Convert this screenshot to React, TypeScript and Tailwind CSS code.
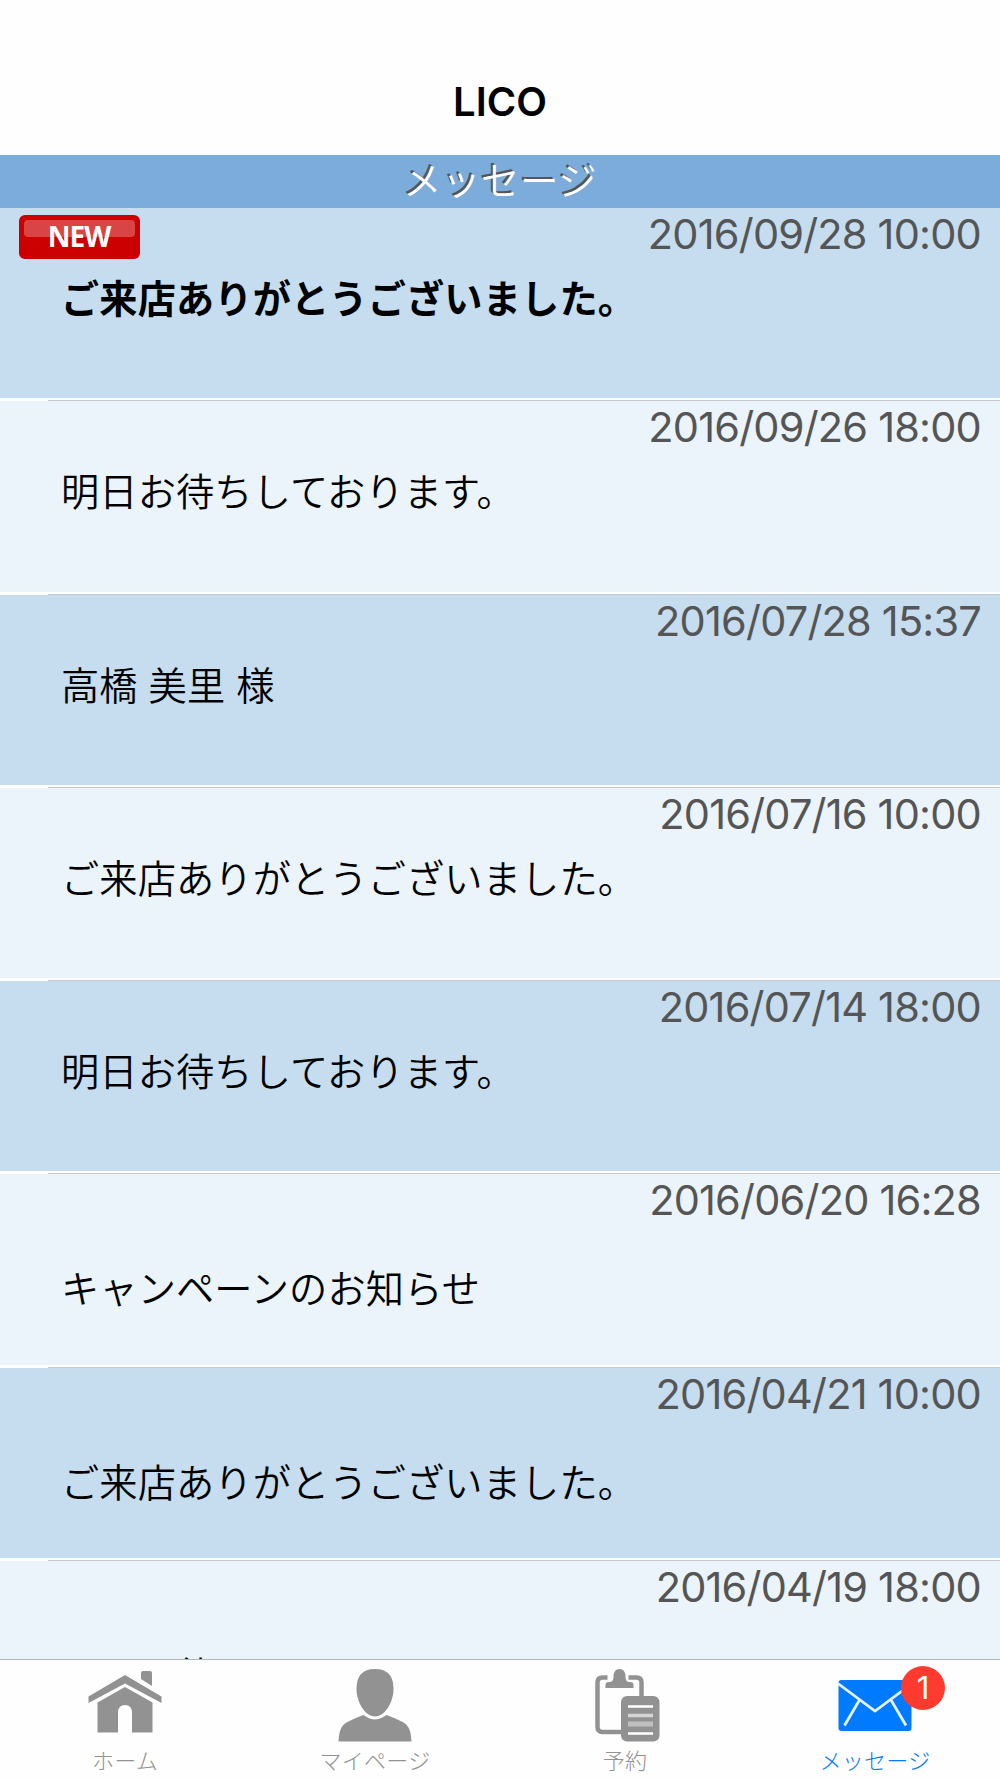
import React from 'react';

interface Message {
  date: string;
  title: string;
  isNew?: boolean;
  low?: boolean;
}

const messages: Message[] = [
  { date: '2016/09/28 10:00', title: 'ご来店ありがとうございました。', isNew: true },
  { date: '2016/09/26 18:00', title: '明日お待ちしております。' },
  { date: '2016/07/28 15:37', title: '高橋 美里 様' },
  { date: '2016/07/16 10:00', title: 'ご来店ありがとうございました。' },
  { date: '2016/07/14 18:00', title: '明日お待ちしております。' },
  { date: '2016/06/20 16:28', title: 'キャンペーンのお知らせ', low: true },
  { date: '2016/04/21 10:00', title: 'ご来店ありがとうございました。', low: true },
  { date: '2016/04/19 18:00', title: '明日お待ちしております。', low: true },
];

function HomeIcon() {
  return (
    <svg width="74" height="74" viewBox="0 0 74 74" fill="currentColor">
      <path d="M0.500 28.5 37 7l36.500 21.5V35L37 15.5.5 35z" />
      <path d="M53 5q0-2 2-2h7q2 0 2 2v13l-11-7z" />
      <path d="M9.5 34.500 37 19l27.500 15.500V64.500H44V45q0-8-7-8t-7 8v19.500H9.500z" />
    </svg>
  );
}

function PersonIcon() {
  return (
    <svg width="74" height="74" viewBox="0 0 74 74" fill="currentColor">
      <path d="M37 1c13 0 18.500 7 18.500 20C55.500 34 47 48.500 37 48.500S18.500 34 18.500 21C18.500 8 24 1 37 1z" />
      <path d="M25.500 47c2 1 6 4.500 11.500 4.500S46.500 48 48.500 47c5 2 11 4 17 7.500C72 58 73 66 73.500 73.500H.5C1 66 2 58 8.500 54.500c6-3.500 12-5.500 17-7.500z" />
    </svg>
  );
}

function ReserveIcon() {
  return (
    <svg width="74" height="74" viewBox="2.500 0 74 74" fill="currentColor">
      <path d="M22 9.500h-5q-5 0-5 5V59q0 5 5 5h21M43 9.500h8q5 0 5 5V30" fill="none" stroke="currentColor" strokeWidth="4.500" />
      <path d="M28 9q0-8 6-8t6 8q0 5 4 5h1q3 0 3 3v3H20v-3q0-3 3-3h1q4 0 4-5z" />
      <rect x="35.500" y="28" width="38.500" height="45.500" rx="6" />
      <path d="M42.500 38.500h25M42.500 65.500h25" stroke="white" strokeWidth="2.500" />
      <path d="M42.500 47.500h25" stroke="#d5d5d5" strokeWidth="3.500" />
      <path d="M42.500 56h25" stroke="#c0c0c0" strokeWidth="5" />
    </svg>
  );
}

function MailIcon() {
  return (
    <svg width="74" height="74" viewBox="0 0 74 74">
      <rect x="0.500" y="12" width="73" height="51" rx="3" fill="currentColor" />
      <path d="M0 15.500 37 43l37-27.500M21.500 32 6.500 57.500M53 32l15 25.500" fill="none" stroke="#e4f1ff" strokeWidth="2.800" />
    </svg>
  );
}

const tabs = [
  { label: 'ホーム', icon: <HomeIcon /> },
  { label: 'マイページ', icon: <PersonIcon /> },
  { label: '予約', icon: <ReserveIcon /> },
  { label: 'メッセージ', icon: <MailIcon />, active: true, badge: 1 },
];

function NewBadge() {
  return (
    <div className="relative ml-[19px] mt-[7px] flex h-[44px] w-[121px] shrink-0 justify-center rounded-[6px] bg-[#cc0000]">
      <div className="absolute left-[5px] top-[5px] h-[17px] w-[111px] rounded-[4px] bg-[#d94444]" />
      <span className="relative pr-px font-['Open_Sans',sans-serif] text-[28px] font-bold leading-[43px] tracking-[-1px] text-white">
        NEW
      </span>
    </div>
  );
}

function MessageRow({ message, shaded }: { message: Message; shaded: boolean }) {
  return (
    <li className="flex h-[193.3px] shrink-0 flex-col">
      <div className={`flex min-h-0 flex-1 flex-col ${shaded ? 'bg-[#c6dcef]' : 'bg-[#ebf3fb]'}`}>
        <div className="flex h-[57px] shrink-0 items-start">
          {message.isNew && <NewBadge />}
          <time className="ml-auto mr-[19px] text-[41.5px] leading-[52px] tracking-[-0.800px] text-[#555555]">{message.date}</time>
        </div>
        <p
          className={`pl-[61px] text-[38.200px] leading-[60px] tracking-[0.150px] text-black ${message.isNew ? 'font-bold' : 'font-[350]'} ${message.low ? 'mt-[28px]' : 'mt-[4px]'}`}
        >
          {message.title}
        </p>
      </div>
      <div className="flex h-[3px] shrink-0 flex-col bg-white">
        <div className="ml-12 mt-auto h-px bg-[#c8c7cc]" />
      </div>
    </li>
  );
}

export default function App() {
  return (
    <div className="flex h-[1778px] w-[1000px] flex-col overflow-hidden bg-white font-['Inter','Noto_Sans_CJK_JP',sans-serif]">
      <header className="flex h-[155px] shrink-0 items-end justify-center bg-[#fefefe] pb-[23px]">
        <h1 className="text-[40px] font-semibold leading-[60px] text-black">LICO</h1>
      </header>
      <h2 className="h-[53px] shrink-0 bg-[#7bacdb] text-center text-[38.500px] font-[350] leading-[53px] tracking-[0.500px] text-white [text-shadow:-2px_-2px_0_#555555]">
        メッセージ
      </h2>
      <ul className="flex min-h-0 flex-1 flex-col overflow-hidden">
        {messages.map((message, index) => (
          <MessageRow key={message.date} message={message} shaded={index % 2 === 0} />
        ))}
      </ul>
      <nav className="grid h-[119px] shrink-0 grid-cols-4 border-t border-[#b2b5ba] bg-[#fefefe]">
        {tabs.map((tab) => (
          <div
            key={tab.label}
            className={`flex flex-col items-center pt-2 ${tab.active ? 'text-[#007aff]' : 'text-[#929292]'}`}
          >
            <div className="relative">
              {tab.icon}
              {tab.badge && (
                <span className="absolute -right-[33px] -top-[2px] h-[44px] w-[44px] rounded-full bg-[#ff3b30] text-center text-[31px] leading-[43px] text-white">
                  {tab.badge}
                </span>
              )}
            </div>
            <span className="mt-1 text-[22px] font-light leading-[30px] tracking-[0.300px]">{tab.label}</span>
          </div>
        ))}
      </nav>
    </div>
  );
}
